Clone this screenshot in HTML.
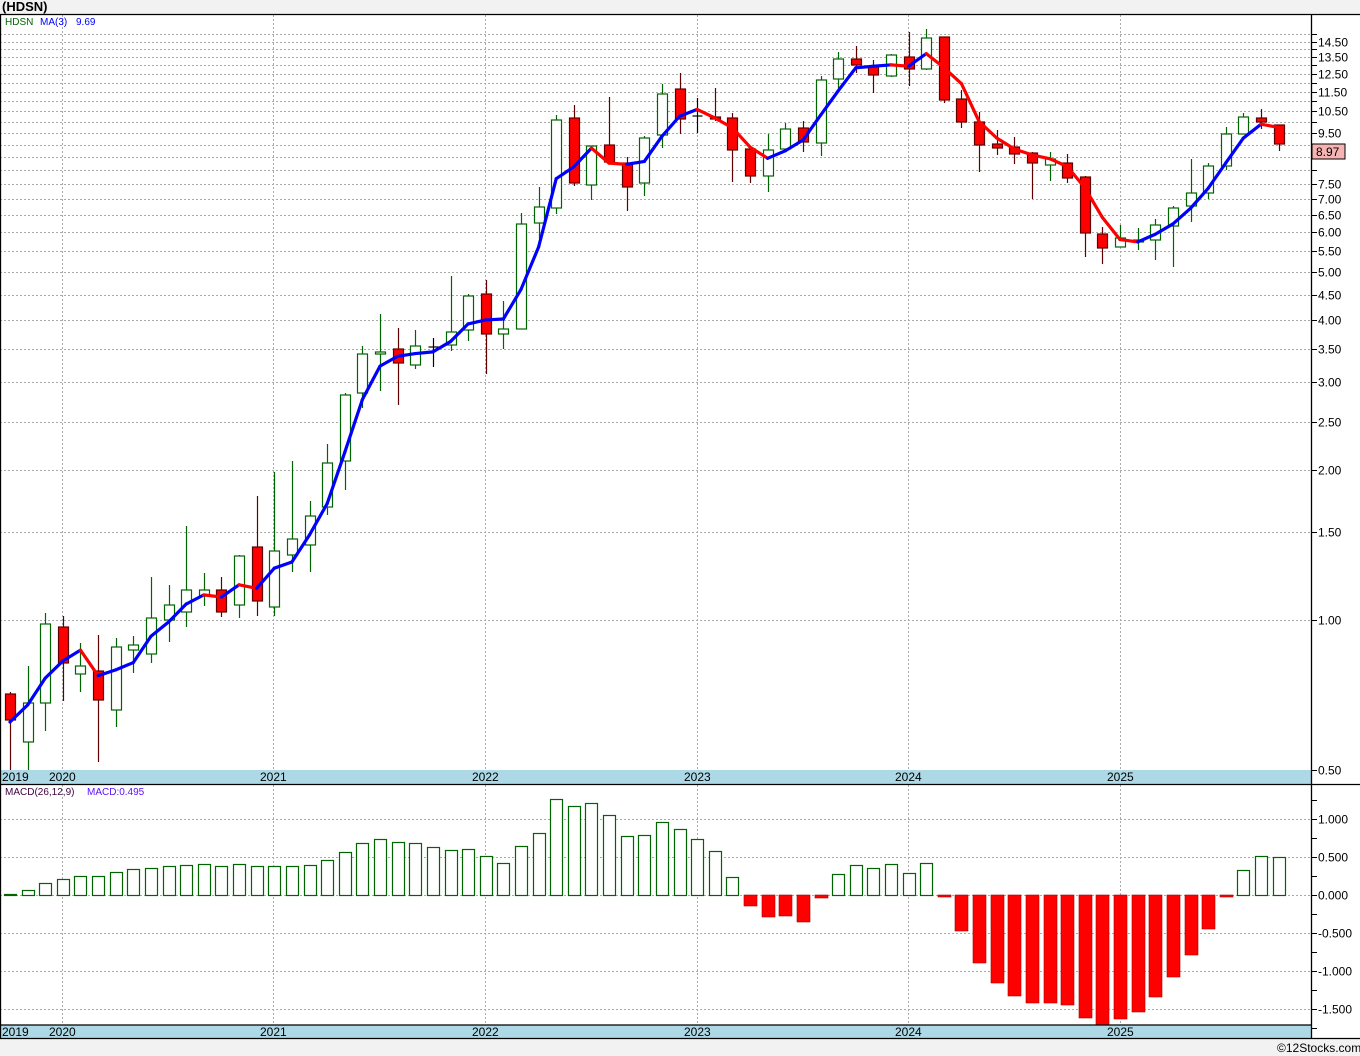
<!DOCTYPE html>
<html><head><meta charset="utf-8"><style>
html,body{margin:0;padding:0;background:#f2f2f2;}
body{width:1360px;height:1056px;overflow:hidden;position:relative;font-family:"Liberation Sans",sans-serif;}
svg{position:absolute;left:0;top:0;}
text{font-family:"Liberation Sans",sans-serif;}
</style></head><body>
<svg id="s" width="1360" height="1056" viewBox="0 0 1360 1056" xmlns="http://www.w3.org/2000/svg">
<rect x="0" y="14" width="1360" height="1025" fill="#fff"/>
<g id="grid"></g>
<g id="cand"></g>
<g id="ma"></g>
<g id="macd"></g>
<rect x="0" y="770" width="1311" height="14" fill="#add8e6"/>
<rect x="0" y="1025" width="1311" height="13" fill="#add8e6"/>
<g fill="#000" stroke="#000" stroke-width="1.3">
<line x1="0" y1="14.5" x2="1360" y2="14.5"/>
<line x1="1311.5" y1="14" x2="1311.5" y2="1039"/>
<line x1="0.5" y1="14" x2="0.5" y2="1039"/>
<line x1="0" y1="784.5" x2="1360" y2="784.5"/>
<line x1="0" y1="1038.5" x2="1360" y2="1038.5"/>
<line x1="0" y1="1025" x2="1311" y2="1025"/>
</g>
<g font-size="12" fill="#000">
<text x="2" y="11" font-weight="bold" font-size="13">(HDSN)</text>
<text x="5" y="25" font-size="10" fill="#006400">HDSN</text>
<text x="40" y="25" font-size="10" fill="#0000ff">MA(3)</text>
<text x="76" y="25" font-size="10" fill="#0000ff">9.69</text>
<text x="5" y="795" font-size="10" fill="#400040">MACD(26,12,9)</text>
<text x="87" y="795" font-size="10" fill="#6010ff">MACD:0.495</text>
<text x="2" y="781">2019</text><text x="49" y="781">2020</text><text x="260" y="781">2021</text><text x="472" y="781">2022</text><text x="684" y="781">2023</text><text x="895" y="781">2024</text><text x="1107" y="781">2025</text>
<text x="2" y="1036">2019</text><text x="49" y="1036">2020</text><text x="260" y="1036">2021</text><text x="472" y="1036">2022</text><text x="684" y="1036">2023</text><text x="895" y="1036">2024</text><text x="1107" y="1036">2025</text>
<text x="1277" y="1052">©12Stocks.com</text>
</g>
<g id="axis" font-size="12" fill="#000"></g>
<rect x="1312" y="144" width="33" height="15" fill="#f7b3b3" stroke="#000"/>
<text x="1316" y="156" font-size="12">8.97</text>
</svg>
<script>
var NS="http://www.w3.org/2000/svg";
function el(p,t,a){var e=document.createElementNS(NS,t);for(var k in a)e.setAttribute(k,a[k]);p.appendChild(e);return e;}
var G=document.getElementById("grid"),A=document.getElementById("axis"),C=document.getElementById("cand"),M=document.getElementById("ma"),D=document.getElementById("macd");
function Y(p){return 620-498*Math.log10(p);}
function P(y){return Math.pow(10,(620-y)/498);}
// horizontal grid main
var lab={0.5:1,1:1,1.5:1,2:1,2.5:1,3:1,3.5:1,4:1,4.5:1,5:1,5.5:1,6:1,6.5:1,7:1,7.5:1,9.5:1,10.5:1,11.5:1,12.5:1,13.5:1,14.5:1};
var lv=[0.5];for(var v=1;v<=15.01;v+=0.5)lv.push(Math.round(v*10)/10);
lv.forEach(function(v){var y=Math.round(Y(v))+0.5;if(y<16)return;
 el(G,"line",{x1:0,x2:1311,y1:y,y2:y,stroke:"#aaa","stroke-dasharray":"2,2"});
 el(A,"line",{x1:1312,x2:1317,y1:y,y2:y,stroke:"#000"});
 if(lab[v]){var t=el(A,"text",{x:1318,y:y+4});t.textContent=v.toFixed(2);}
});
[62,273,485,697,908,1120].forEach(function(x){
 el(G,"line",{x1:x+.5,x2:x+.5,y1:15,y2:770,stroke:"#aaa","stroke-dasharray":"2,2"});
 el(G,"line",{x1:x+.5,x2:x+.5,y1:785,y2:1025,stroke:"#aaa","stroke-dasharray":"2,2"});
});
// MACD grid
for(var m=-1.75;m<=1.26;m+=0.25){var y=Math.round(895-76*m)+0.5;
 el(A,"line",{x1:1312,x2:1317,y1:y,y2:y,stroke:"#000"});
 if(Math.abs(m*2-Math.round(m*2))<1e-6){
  el(G,"line",{x1:0,x2:1311,y1:y,y2:y,stroke:"#aaa","stroke-dasharray":"2,2"});
  var t=el(A,"text",{x:1318,y:y+4});t.textContent=(m<0?"-":"")+Math.abs(m).toFixed(3);}
}
// candles: high, low, bodyTop, bodyBot, up(1)/down(0)/doji(2)
var c=[[692,770,694,720,0],[666,770,703,742,1],[613,731,624,703,1],[616,701,627,663,0],[643,692,666,674,1],[635,762,671,700,0],[638,727,647,710,1],[636,673,645,650,1],[577,663,618,654,1],[585,642,605,620,1],[526,627,590,612,1],[573,606,590,596,1],[577,617,590,612,0],[555,618,556,605,1],[496,616,547,601,0],[472,616,551,607,1],[461,572,539,555,1],[501,572,516,545,1],[444,515,463,507,1],[393,490,395,461,1],[346,408,354,393,1],[314,391,352,354,1],[328,405,349,363,0],[330,369,346,365,1],[338,367,347,347,2],[276,351,332,345,1],[294,341,296,330,1],[280,374,294,334,0],[301,349,329,334,1],[213,329,224,329,1],[187,239,207,223,1],[115,214,120,208,1],[105,186,118,183,0],[146,200,146,185,1],[97,162,145,162,0],[157,211,163,187,0],[136,196,138,183,1],[84,148,94,135,1],[73,134,89,119,0],[98,133,116,116,2],[88,121,117,119,0],[113,182,118,150,0],[149,183,149,176,0],[134,192,150,176,1],[123,149,129,149,1],[121,152,128,142,0],[76,156,80,143,1],[52,88,59,79,1],[46,73,59,65,0],[60,93,67,75,0],[54,77,55,76,1],[32,86,57,69,0],[29,70,38,69,1],[37,103,37,100,0],[90,128,99,122,0],[112,172,122,145,0],[130,155,144,148,0],[137,164,147,154,0],[152,199,153,163,0],[152,181,159,165,1],[154,183,163,178,0],[176,257,177,233,0],[227,264,234,248,0],[225,247,238,247,1],[228,250,240,242,1],[219,260,225,240,1],[206,267,208,226,1],[159,222,193,206,1],[163,199,166,193,1],[127,170,134,166,1],[113,134,117,134,1],[109,129,118,122,0],[125,151,125,144,0]];
var X=function(i){return 10+17.62*i;};
var closes=[];
c.forEach(function(d,i){var x=Math.round(X(i))+0.5;
 var col=d[4]==1?"#006400":(d[4]==0?"#600000":"#000");
 el(C,"line",{x1:x,x2:x,y1:d[0],y2:d[1],stroke:col,"stroke-width":1.2});
 if(d[4]==2){el(C,"line",{x1:x-5,x2:x+5,y1:d[2],y2:d[2],stroke:"#000","stroke-width":1.2});}
 else el(C,"rect",{x:x-5,y:d[2],width:10,height:Math.max(d[3]-d[2],1.5),fill:d[4]==1?"#fff":"#f00",stroke:col,"stroke-width":1.2});
 closes.push(P(d[4]==0?d[3]:d[2]));
});
var prev=null;
for(var i=2;i<c.length;i++){var m=(closes[i]+closes[i-1]+closes[i-2])/3;var pt=[X(i),Y(m)];
 if(prev)el(M,"line",{x1:prev[0],y1:prev[1],x2:pt[0],y2:pt[1],stroke:pt[1]<=prev[1]?"#0000ff":"#ff0000","stroke-width":3.2,"stroke-linecap":"round"});
 prev=pt;}
// first ma points
el(M,"line",{x1:X(0),y1:722,x2:X(1),y2:705,stroke:"#0000ff","stroke-width":3.2,"stroke-linecap":"round"});
el(M,"line",{x1:X(1),y1:705,x2:X(2),y2:Y((closes[0]+closes[1]+closes[2])/3),stroke:"#0000ff","stroke-width":3.2,"stroke-linecap":"round"});
// MACD bars (top y for positive, bottom y for negative)
var mb=[894,890,883,879,876,876,872,869,868,866,865,864,866,864,866,866,866,865,860,852,843,839,842,843,847,850,849,856,863,846,833,799,806,803,815,836,835,822,829,839,851,877,906,917,916,922,898,874,865,868,864,873,863,897,931,963,983,996,1003,1003,1005,1018,1025,1019,1012,997,977,955,929,897,870,856,857];
mb.forEach(function(v,i){var x=Math.round(X(i))-6;
 if(v<895)el(D,"rect",{x:x+.5,y:v+.5,width:12,height:895-v,fill:"#fff",stroke:"#006400","stroke-width":1.2});
 else el(D,"rect",{x:x,y:895,width:13,height:Math.max(v-895,2),fill:"#f00",stroke:"#a00","stroke-width":.6});
});
</script>
</body></html>
